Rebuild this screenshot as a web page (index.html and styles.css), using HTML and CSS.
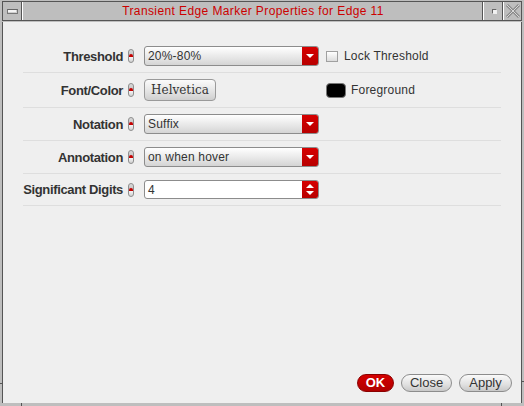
FILE: index.html
```html
<!DOCTYPE html>
<html>
<head>
<meta charset="utf-8">
<link rel="stylesheet" href="styles.css">
</head>
<body>
<div class="win">
  <span class="tick tick-l"></span>
  <span class="tick tick-r"></span>
  <span class="tick tick-bl"></span>
  <span class="tick tick-br"></span>
  <div class="titlebar">
    <div class="tb-menu"><span class="minbar"></span></div>
    <div class="tb-title">Transient Edge Marker Properties for Edge 11</div>
    <div class="tb-max"><span class="maxsq"></span></div>
    <div class="tb-close">
      <svg width="16" height="16" viewBox="0 0 16 16">
        <path d="M2 2 L14 14 M14 2 L2 14" stroke="#8a8a8a" stroke-width="3" fill="none"/>
        <path d="M2 2 L14 14 M14 2 L2 14" stroke="#d8d8d8" stroke-width="1" fill="none"/>
      </svg>
    </div>
  </div>
  <div class="content">
    <div class="form">
      <div class="row">
        <div class="label">Threshold</div>
        <span class="spin"><span class="dots"></span></span>
        <div class="combo"><span class="combo-text">20%-80%</span><span class="combo-btn"><span class="tri-down"></span></span></div>
        <div class="extra"><span class="check"></span><span class="extra-text">Lock Threshold</span></div>
      </div>
      <div class="row">
        <div class="label">Font/Color</div>
        <span class="spin"></span>
        <div class="ctrl-cell"><span class="fontbtn">Helvetica</span></div>
        <div class="extra"><span class="swatch"></span><span class="extra-text">Foreground</span></div>
      </div>
      <div class="row">
        <div class="label">Notation</div>
        <span class="spin"></span>
        <div class="combo"><span class="combo-text">Suffix</span><span class="combo-btn"><span class="tri-down"></span></span></div>
      </div>
      <div class="row">
        <div class="label">Annotation</div>
        <span class="spin"></span>
        <div class="combo"><span class="combo-text">on when hover</span><span class="combo-btn"><span class="tri-down"></span></span></div>
      </div>
      <div class="row">
        <div class="label">Significant Digits</div>
        <span class="spin"></span>
        <div class="combo entry"><span class="combo-text">4</span><span class="combo-btn spinbtn"><span class="tri-up"></span><span class="tri-down"></span></span></div>
      </div>
    </div>
    <div class="actions">
      <span class="btn btn-ok">OK</span>
      <span class="btn btn-close">Close</span>
      <span class="btn btn-apply">Apply</span>
    </div>
  </div>
</div>
</body>
</html>
```
FILE: styles.css
```css
* { box-sizing: border-box; }
html, body { margin: 0; padding: 0; }
body {
  width: 524px;
  height: 406px;
  overflow: hidden;
  font-family: "Liberation Sans", Arial, sans-serif;
}
.win {
  position: relative;
  width: 524px;
  height: 406px;
  background: #bebebe;
  padding: 1px 0 3px 2px;
  display: flex;
  flex-direction: column;
}
.tick { position: absolute; background: #555; }
.tick-l { left: 0; top: 383px; width: 2px; height: 1px; }
.tick-r { right: 0; top: 381px; width: 2px; height: 1px; }
.tick-bl { left: 21px; bottom: 0; width: 1px; height: 3px; }
.tick-br { left: 501px; bottom: 0; width: 1px; height: 3px; }

.titlebar {
  width: 520px;
  height: 20px;
  border: 1px solid #555;
  display: flex;
  background: #bebebe;
  flex: none;
}
.tb-menu {
  width: 19px;
  border-right: 1px solid #555;
  display: flex;
  align-items: center;
  justify-content: flex-start;
  padding-left: 4px;
}
.minbar {
  width: 11px;
  height: 5px;
  border: 1px solid #777;
  border-top-color: #666;
  background: #f4f4f4;
  box-shadow: inset -1px -1px 0 #cfcfcf;
}
.tb-title {
  width: 461px;
  border-left: 1px solid #fff;
  border-right: 1px solid #555;
  text-align: center;
  color: #cc0000;
  font-size: 12px;
  letter-spacing: 0.4px;
  line-height: 18px;
  padding-left: 1px;
}
.tb-max {
  width: 20px;
  border-left: 1px solid #fff;
  border-right: 1px solid #555;
  display: flex;
  align-items: center;
  justify-content: center;
}
.maxsq {
  width: 5px;
  height: 5px;
  border: 1px solid #666;
  border-right-color: #eee;
  border-bottom-color: #eee;
  background: #f2f2f2;
  margin-left: 2px;
}
.tb-close {
  width: 18px;
  border-left: 1px solid #fff;
  display: flex;
  align-items: center;
  justify-content: center;
}

.content {
  flex: 1;
  margin-top: 1px;
  width: 520px;
  background: #efefef;
  border-left: 1px solid #555;
  border-right: 1px solid #555;
  display: flex;
  flex-direction: column;
}
.form {
  margin: 18px 0 0 20px;
  width: 478px;
}
.row {
  display: flex;
  align-items: center;
  padding: 6px 0;
  border-bottom: 1px solid #dedede;
}
.label {
  width: 100px;
  text-align: right;
  font-weight: bold;
  font-size: 13px;
  color: #333;
  white-space: nowrap;
  letter-spacing: -0.35px;
}
.spin {
  position: relative;
  width: 6px;
  height: 14px;
  margin: 0 10px 0 5px;
  border: 1px solid #8e8e8e;
  border-radius: 3px;
  background: linear-gradient(#dadada, #c8c8c8 35%, #f4f4f4 60%, #d0d0d0);
  flex: none;
}
.spin::after {
  content: "";
  position: absolute;
  left: 0;
  top: 4px;
  width: 4px;
  height: 3px;
  background: #c40000;
  border-radius: 2px 2px 0 0;
}
.dots {
  position: absolute;
  left: 1px;
  top: 0;
  width: 2px;
  height: 12px;
  background:
    radial-gradient(circle, #000 45%, transparent 50%) 0 0 / 2px 2px no-repeat,
    radial-gradient(circle, #000 45%, transparent 50%) 0 9px / 2px 2px no-repeat;
  z-index: 1;
}
.combo {
  width: 175px;
  height: 20px;
  display: flex;
  border: 1px solid #8c8c8c;
  border-radius: 3px;
  background: linear-gradient(#ffffff, #e6e6e6 60%, #d4d4d4);
  overflow: hidden;
  flex: none;
}
.combo.entry {
  background: #fff;
  height: 19px;
}
.combo-text {
  flex: 1;
  font-size: 12px;
  color: #333;
  line-height: 18px;
  padding-left: 3px;
  letter-spacing: 0.2px;
}
.combo-btn {
  width: 16px;
  background: linear-gradient(#d60000, #b80000);
  display: flex;
  flex-direction: column;
  align-items: center;
  justify-content: center;
  gap: 3px;
}
.tri-down {
  width: 0;
  height: 0;
  border-left: 4px solid transparent;
  border-right: 4px solid transparent;
  border-top: 4px solid #fff;
  margin-top: -1px;
}
.tri-up {
  width: 0;
  height: 0;
  border-left: 4px solid transparent;
  border-right: 4px solid transparent;
  border-bottom: 4px solid #fff;
}
.spinbtn .tri-down { margin-top: 0; }
.ctrl-cell { width: 175px; flex: none; }
.fontbtn {
  display: inline-block;
  width: 72px;
  height: 22px;
  border: 1px solid #9a9a9a;
  border-radius: 4px;
  background: linear-gradient(#fbfbfb, #e2e2e2 60%, #cfcfcf);
  font-family: "DejaVu Serif", "Liberation Serif", serif;
  font-size: 12px;
  color: #333;
  text-align: center;
  line-height: 20px;
}
.extra {
  display: flex;
  align-items: center;
  margin-left: 7px;
}
.check {
  width: 12px;
  height: 11px;
  border: 1px solid #a0a0a0;
  background: linear-gradient(#fff, #dcdcdc);
  margin-right: 6px;
}
.swatch {
  width: 20px;
  height: 15px;
  background: #000;
  border: 1px solid #777;
  border-radius: 4px;
  margin-right: 5px;
}
.extra-text {
  font-size: 12px;
  color: #333;
  letter-spacing: 0.2px;
}
.actions {
  margin-top: auto;
  display: flex;
  justify-content: flex-end;
  gap: 7px;
  padding: 0 9px 11px 0;
}
.btn {
  height: 18px;
  border-radius: 9px;
  border: 1px solid #8c8c8c;
  background: linear-gradient(#fafafa, #e0e0e0 60%, #c8c8c8);
  font-size: 13px;
  color: #333;
  text-align: center;
  line-height: 16px;
}
.btn-ok {
  width: 37px;
  background: linear-gradient(#d40000, #b00000);
  border-color: #8a0000;
  color: #fff;
  font-weight: bold;
}
.btn-close { width: 51px; }
.btn-apply { width: 53px; }
```
